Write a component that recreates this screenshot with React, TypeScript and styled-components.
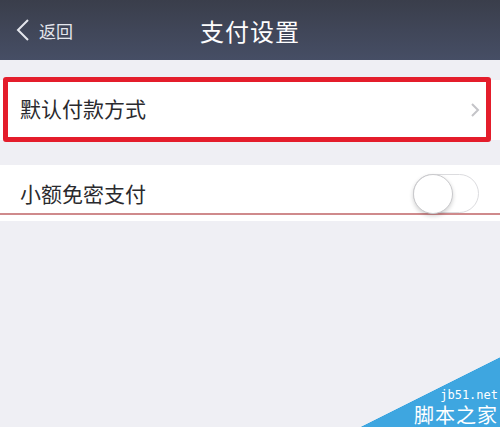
import React from 'react';
import styled, { createGlobalStyle } from 'styled-components';

const GlobalStyle = createGlobalStyle`
  html, body {
    margin: 0;
    padding: 0;
    background: #efeff4;
  }
  body {
    font-family: "Noto Sans CJK SC", "Noto Sans", sans-serif;
    width: 500px;
    height: 427px;
    overflow: hidden;
  }
`;

const Page = styled.div`
  position: relative;
  width: 500px;
  height: 427px;
  background: #efeff4;
  display: flex;
  flex-direction: column;
`;

const Header = styled.header`
  height: 60px;
  display: grid;
  grid-template-columns: 1fr auto 1fr;
  align-items: center;
  padding: 0 15px;
  background: linear-gradient(180deg, #3a3e4b 0%, #464e65 100%);
  color: #fff;
`;

const Back = styled.div`
  display: flex;
  align-items: center;
  gap: 8px;
  color: #e4e6ec;
  font-size: 17px;
`;

const Title = styled.h1`
  margin: 0;
  font-size: 24px;
  font-weight: 400;
  letter-spacing: 1px;
  color: #fdfdfd;
`;

const Group = styled.section<{ $top: number }>`
  position: relative;
  margin-top: ${p => p.$top}px;
  background: #fff;
`;

const Row = styled.div<{ $h: number; $pt?: number }>`
  height: ${p => p.$h}px;
  box-sizing: border-box;
  display: flex;
  align-items: center;
  justify-content: space-between;
  padding: ${p => p.$pt ?? 0}px 20px 0 20px;
  font-size: 21px;
  color: #2a2a2e;
`;

const Highlight = styled.div`
  position: absolute;
  left: 3px;
  top: -3px;
  width: 488px;
  height: 65px;
  box-sizing: border-box;
  border: 5px solid #e41d2b;
  border-radius: 3px;
  pointer-events: none;
`;

const Underline = styled.div`
  height: 2px;
  background: #cf8a8c;
  margin-bottom: 6px;
`;

const Track = styled.div`
  position: relative;
  width: 66px;
  height: 39px;
  box-sizing: border-box;
  border: 1.5px solid #dcdcdf;
  border-radius: 20px;
  background: #fff;
  margin-right: 1px;
`;

const Knob = styled.div`
  position: absolute;
  left: -1px;
  top: -1px;
  width: 38px;
  height: 38px;
  border-radius: 50%;
  background: #fff;
  border: 1px solid #c9c9cc;
  box-shadow: 0 2px 4px rgba(0, 0, 0, 0.18);
`;

const Watermark = styled.div`
  position: absolute;
  right: 0;
  bottom: 0;
  width: 140px;
  height: 70px;
  background: linear-gradient(to bottom right, transparent 50%, #3ea6e0 50.5%);
  display: flex;
  flex-direction: column;
  align-items: flex-end;
  justify-content: flex-end;
  padding-right: 2px;
  box-sizing: border-box;
  color: #fff;
`;

const WaterNet = styled.span`
  font-family: "DejaVu Sans Mono", monospace;
  font-size: 12px;
  line-height: 14px;
`;

const WaterName = styled.span`
  font-size: 20px;
  line-height: 25px;
  letter-spacing: 1px;
`;

export default function App() {
  return (
    <Page>
      <GlobalStyle />
      <Header>
        <Back>
          <svg width="16" height="24" viewBox="0 0 16 24">
            <path d="M13 2 L3 12 L13 22" fill="none" stroke="#e4e6ec" strokeWidth="2" />
          </svg>
          <span>返回</span>
        </Back>
        <Title>支付设置</Title>
      </Header>

      <Group $top={20}>
        <Row $h={60}>
          <span style={{ marginBottom: 4 }}>默认付款方式</span>
          <svg width="10" height="14" viewBox="0 0 10 14">
            <path d="M2 1 L8 7 L2 13" fill="none" stroke="#c4c4c8" strokeWidth="2" />
          </svg>
        </Row>
        <Highlight />
      </Group>

      <Group $top={25}>
        <Row $h={48} $pt={8}>
          <span>小额免密支付</span>
          <Track>
            <Knob />
          </Track>
        </Row>
        <Underline />
      </Group>

      <Watermark>
        <WaterNet>jb51.net</WaterNet>
        <WaterName>脚本之家</WaterName>
      </Watermark>
    </Page>
  );
}
